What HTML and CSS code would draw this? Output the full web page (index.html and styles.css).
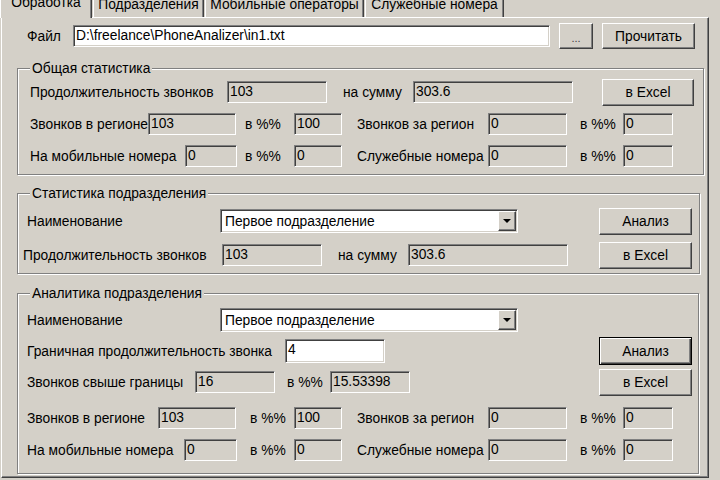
FILE: index.html
```html
<!DOCTYPE html>
<html lang="ru">
<head>
    <meta charset="UTF-8">
    <title>PhoneAnalizer</title>
    <link rel="stylesheet" href="styles.css">
</head>
<body>
    <div class="tabs">
        <div class="tab active">Обработка</div>
        <div class="tab t-dep">Подразделения</div>
        <div class="tab t-mob">Мобильные операторы</div>
        <div class="tab t-srv">Служебные номера</div>
    </div>

    <div class="panel">
        <!-- файл -->
        <div class="row file-row">
            <span class="lbl w46">Файл</span>
            <div class="field white w477">D:\freelance\PhoneAnalizer\in1.txt</div>
            <button class="btn small dots w34 ml9">...</button>
            <button class="btn small w93 ml9">Прочитать</button>
        </div>

        <!-- общая статистика -->
        <div class="group g-total">
            <span class="legend">Общая статистика</span>
            <div class="row pl12">
                <span class="lbl w197">Продолжительность звонков</span>
                <div class="field w100">103</div>
                <span class="lbl ml16 w70">на сумму</span>
                <div class="field w160">303.6</div>
                <button class="btn ml29 w92">в Excel</button>
            </div>
            <div class="row pl12">
                <span class="lbl w118">Звонков в регионе</span>
                <div class="field w88">103</div>
                <span class="lbl ml9 w49">в %%</span>
                <div class="field w48">100</div>
                <span class="lbl ml15 w131">Звонков за регион</span>
                <div class="field w79">0</div>
                <span class="lbl ml13 w43">в %%</span>
                <div class="field w50">0</div>
            </div>
            <div class="row pl12">
                <span class="lbl w155">На мобильные номера</span>
                <div class="field w52">0</div>
                <span class="lbl ml8 w49">в %%</span>
                <div class="field w48">0</div>
                <span class="lbl ml15 w131">Служебные номера</span>
                <div class="field w79">0</div>
                <span class="lbl ml13 w43">в %%</span>
                <div class="field w50">0</div>
            </div>
        </div>

        <!-- статистика подразделения -->
        <div class="group g-dep">
            <span class="legend">Статистика подразделения</span>
            <div class="row pl9">
                <span class="lbl w193">Наименование</span>
                <div class="combo w298">
                    <span class="combo-text">Первое подразделение</span>
                    <span class="combo-btn"><i class="arrow"></i></span>
                </div>
                <button class="btn ml81 w93">Анализ</button>
            </div>
            <div class="row pl5 mt2">
                <span class="lbl w199">Продолжительность звонков</span>
                <div class="field w100">103</div>
                <span class="lbl ml16 w70">на сумму</span>
                <div class="field w160">303.6</div>
                <button class="btn ml31 w93">в Excel</button>
            </div>
        </div>

        <!-- аналитика подразделения -->
        <div class="group g-an">
            <span class="legend">Аналитика подразделения</span>
            <div class="row pl9">
                <span class="lbl w193">Наименование</span>
                <div class="combo w298">
                    <span class="combo-text">Первое подразделение</span>
                    <span class="combo-btn"><i class="arrow"></i></span>
                </div>
            </div>
            <div class="row pl9 h30">
                <span class="lbl w258">Граничная продолжительность звонка</span>
                <div class="field white w100 h24">4</div>
                <button class="btn default ml214 w93">Анализ</button>
            </div>
            <div class="row pl9">
                <span class="lbl w168">Звонков свыше границы</span>
                <div class="field w80">16</div>
                <span class="lbl ml12 w43">в %%</span>
                <div class="field w80">15.53398</div>
                <button class="btn ml189 w93">в Excel</button>
            </div>
            <div class="row pl9 mt4">
                <span class="lbl w131">Звонков в регионе</span>
                <div class="field w78">103</div>
                <span class="lbl ml14 w44">в %%</span>
                <div class="field w48">100</div>
                <span class="lbl ml15 w131">Звонков за регион</span>
                <div class="field w79">0</div>
                <span class="lbl ml13 w43">в %%</span>
                <div class="field w50">0</div>
            </div>
            <div class="row pl9">
                <span class="lbl w157">На мобильные номера</span>
                <div class="field w53">0</div>
                <span class="lbl ml13 w44">в %%</span>
                <div class="field w48">0</div>
                <span class="lbl ml15 w131">Служебные номера</span>
                <div class="field w79">0</div>
                <span class="lbl ml13 w43">в %%</span>
                <div class="field w50">0</div>
            </div>
        </div>
    </div>
</body>
</html>
```

FILE: styles.css
```css
* {
    margin: 0;
    padding: 0;
    box-sizing: border-box;
}

body {
    background: #d4d0c8;
    font-family: 'Liberation Sans', Arial, sans-serif;
    font-size: 13.8px;
    color: #000;
    width: 720px;
    height: 480px;
    overflow: hidden;
}

/* вкладки */
.tabs {
    display: flex;
    align-items: flex-end;
    height: 20px;
    margin-top: -3px;
}

.tab {
    height: 20px;
    line-height: 16px;
    text-align: center;
    white-space: nowrap;
    margin-left: 1px;
    border-left: 1px solid #fff;
    border-right: 1px solid #404040;
    box-shadow: inset -1px 0 0 #808080;
}

.tab.active {
    width: 92px;
    height: 23px;
    margin-left: 0;
    margin-bottom: -1px;
    position: relative;
    z-index: 1;
    background: #d4d0c8;
}

.t-dep { width: 111px; }
.t-mob { width: 159px; }
.t-srv { width: 139px; }

.panel {
    margin-left: 1px;
    width: 708px;
    height: 461px;
    padding-top: 5px;
    border-top: 1px solid #fff;
    border-left: 1px solid #fff;
    border-right: 1px solid #404040;
    border-bottom: 1px solid #404040;
    box-shadow: inset -1px -1px 0 #808080;
}

/* строки */
.row {
    display: flex;
    align-items: center;
    height: 32px;
}

.file-row {
    height: 26px;
    padding-left: 25px;
}

.lbl {
    white-space: nowrap;
    flex-shrink: 0;
}

/* рамки групп */
.group {
    position: relative;
    margin-left: 15px;
    border: 1px solid #808080;
    box-shadow: 1px 1px 0 #fff, inset 1px 1px 0 #fff;
}

.legend {
    position: absolute;
    top: -8px;
    left: 12px;
    padding: 0 2px;
    line-height: 15px;
    background: #d4d0c8;
    white-space: nowrap;
}

.g-total {
    width: 687px;
    margin-top: 19px;
    padding: 7px 0 2px;
}

.g-dep {
    width: 683px;
    margin-top: 18px;
    padding: 11px 0 2px;
}

.g-an {
    width: 682px;
    margin-top: 19px;
    padding: 10px 0 7px;
}

/* поля */
.field {
    height: 22px;
    line-height: 20px;
    padding: 0 2px;
    flex-shrink: 0;
    white-space: nowrap;
    overflow: hidden;
    border: 1px solid;
    border-color: #808080 #fff #fff #808080;
    box-shadow: inset 1px 1px 0 #404040, inset -1px -1px 0 #d4d0c8;
}

.field.white {
    background: #fff;
}

.combo {
    display: flex;
    align-items: center;
    height: 24px;
    flex-shrink: 0;
    padding: 1px;
    background: #fff;
    border: 1px solid;
    border-color: #808080 #fff #fff #808080;
    box-shadow: inset 1px 1px 0 #404040, inset -1px -1px 0 #d4d0c8;
}

.combo-text {
    flex: 1;
    padding-left: 3px;
    white-space: nowrap;
}

.combo-btn {
    width: 18px;
    height: 20px;
    display: flex;
    justify-content: center;
    align-items: center;
    background: #d4d0c8;
    border: 1px solid;
    border-color: #fff #404040 #404040 #fff;
    box-shadow: inset -1px -1px 0 #808080;
}

.arrow {
    width: 0;
    height: 0;
    border-left: 4px solid transparent;
    border-right: 4px solid transparent;
    border-top: 4px solid #000;
}

/* кнопки */
.btn {
    height: 27px;
    flex-shrink: 0;
    font: inherit;
    color: #000;
    background: #d4d0c8;
    border: 1px solid;
    border-color: #fff #404040 #404040 #fff;
    box-shadow: inset -1px -1px 0 #808080;
}

.btn.small {
    height: 26px;
}

.btn.dots {
    font-size: 11px;
    color: #404040;
    padding-top: 4px;
}

.btn.default {
    height: 28px;
    border-color: #000;
    box-shadow: inset 1px 1px 0 #fff, inset -1px -1px 0 #404040, inset -2px -2px 0 #808080;
}

/* размеры */
.pl5 { padding-left: 5px; }
.pl9 { padding-left: 9px; }
.pl12 { padding-left: 12px; }
.mt2 { margin-top: 2px; }
.mt4 { margin-top: 4px; }
.h30 { height: 30px; }
.h24 { height: 24px; }

.ml8 { margin-left: 8px; }
.ml9 { margin-left: 9px; }
.ml12 { margin-left: 12px; }
.ml13 { margin-left: 13px; }
.ml14 { margin-left: 14px; }
.ml15 { margin-left: 15px; }
.ml16 { margin-left: 16px; }
.ml29 { margin-left: 29px; }
.ml31 { margin-left: 31px; }
.ml81 { margin-left: 81px; }
.ml189 { margin-left: 189px; }
.ml214 { margin-left: 214px; }

.w34 { width: 34px; }
.w43 { width: 43px; }
.w44 { width: 44px; }
.w46 { width: 46px; }
.w48 { width: 48px; }
.w49 { width: 49px; }
.w50 { width: 50px; }
.w52 { width: 52px; }
.w53 { width: 53px; }
.w70 { width: 70px; }
.w78 { width: 78px; }
.w79 { width: 79px; }
.w80 { width: 80px; }
.w88 { width: 88px; }
.w92 { width: 92px; }
.w93 { width: 93px; }
.w100 { width: 100px; }
.w118 { width: 118px; }
.w131 { width: 131px; }
.w155 { width: 155px; }
.w157 { width: 157px; }
.w160 { width: 160px; }
.w168 { width: 168px; }
.w193 { width: 193px; }
.w197 { width: 197px; }
.w199 { width: 199px; }
.w258 { width: 258px; }
.w298 { width: 298px; }
.w477 { width: 477px; }
```
